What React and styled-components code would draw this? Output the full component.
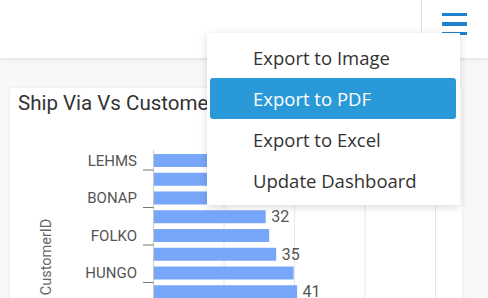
import React from 'react';
import styled, { createGlobalStyle } from 'styled-components';

const GlobalStyle = createGlobalStyle`
    html, body {
        margin:0;
        padding:0;
        background:#f8f8f8;
        overflow:hidden;
    }
    body {
        font-family: Roboto, "Liberation Sans", sans-serif;
    }
`;

const bars = [29, 30, 30, 32, 33, 35, 40, 41];
const labels = ['LEHMS', null, 'BONAP', null, 'FOLKO', null, 'HUNGO', null];
const menuItems = ['Export to Image', 'Export to PDF', 'Export to Excel', 'Update Dashboard'];

const SCALE = 3.49;
const AXIS_X = 143.5;
const PITCH = 18.75;
const BAR_H = 13;
const TOP = 38;

const Chart = () => (
    <svg width="452" height="200" style={{ display: 'block' }}>
        {[1, 2, 3, 4].map(k => (
            <line key={k} x1={AXIS_X + k * 70.5} x2={AXIS_X + k * 70.5} y1={34} y2={200} stroke="#e6e6e6" strokeWidth="1" />
        ))}
        <line x1={AXIS_X} x2={AXIS_X} y1={34} y2={200} stroke="#c8c8c8" strokeWidth="1" />
        {bars.map((v, i) => {
            const y = TOP + i * PITCH;
            return (
                <g key={i}>
                    <rect x={AXIS_X + 0.5} y={y} width={v * SCALE} height={BAR_H} fill="#78a6f9" />
                    {i % 2 === 1 && (
                        <text x={AXIS_X + v * SCALE + 6} y={y + BAR_H / 2 + 5.5} fontSize="16" fill="#555">{v}</text>
                    )}
                    {labels[i] && (
                        <>
                            <text x={127} y={y + BAR_H / 2 + 5} fontSize="15" fill="#555" textAnchor="end">{labels[i]}</text>
                            <line x1={133} x2={AXIS_X} y1={y + BAR_H + 3} y2={y + BAR_H + 3} stroke="#777" strokeWidth="1" />
                        </>
                    )}
                </g>
            );
        })}
        <text transform="translate(40.5 141) rotate(-90)" fontSize="14.5" fill="#666" textAnchor="middle">CustomerID</text>
    </svg>
);

const App = () => {
    return (
        <>
            <GlobalStyle />
            <Header>
                <Separator />
                <MenuButton>
                    <Bar />
                    <Bar />
                    <Bar />
                </MenuButton>
            </Header>
            <Main>
                <Card>
                    <Title>Ship Via Vs CustomerID</Title>
                    <Chart />
                </Card>
            </Main>
            <Menu>
                {menuItems.map(item => (
                    <MenuItem key={item} active={item === 'Export to PDF'}>{item}</MenuItem>
                ))}
            </Menu>
        </>
    );
};

export default App;

// HEADER
const Header = styled.div`
    height:58px;
    background:#fff;
    box-shadow:0 1px 4px rgba(0,0,0,.12);
    display:flex;
    justify-content:flex-end;
    align-items:flex-start;
    position:relative;
    z-index:1;
`;

const Separator = styled.div`
    width:1px;
    height:48px;
    background:#e2e2e2;
    margin-right:20px;
`;

const MenuButton = styled.div`
    width:25px;
    padding-top:13px;
    margin-right:21px;
    display:flex;
    flex-direction:column;
    gap:6px;
`;

const Bar = styled.div`
    height:3.3px;
    background:#1f80cc;
`;

// MAIN
const Main = styled.div`
    padding:30px 26px 0 10px;
    height:240px;
    overflow:hidden;
`;

const Card = styled.div`
    background:#fff;
    box-shadow:0 0 3px rgba(0,0,0,.08);
    height:260px;
    overflow:hidden;
`;

const Title = styled.div`
    font-family:Roboto, sans-serif;
    font-size:20.5px;
    color:#333;
    line-height:28px;
    padding:1px 8px 0;
    height:27px;
    white-space:nowrap;
`;

// DROPDOWN
const Menu = styled.div`
    position:absolute;
    top:33px;
    left:207px;
    width:246px;
    padding:4px 4px 4px 3px;
    background:#fff;
    box-shadow:0 2px 8px rgba(0,0,0,.15);
    z-index:2;
`;

const MenuItem = styled.div.withConfig({ shouldForwardProp: p => p !== 'active' })`
    height:41px;
    line-height:41px;
    padding-left:43px;
    font-family:"Open Sans", "Noto Sans", sans-serif;
    font-size:18.5px;
    border-radius:3px;
    color:${p => p.active ? '#fff' : '#333'};
    background:${p => p.active ? '#299ad7' : 'transparent'};
`;
